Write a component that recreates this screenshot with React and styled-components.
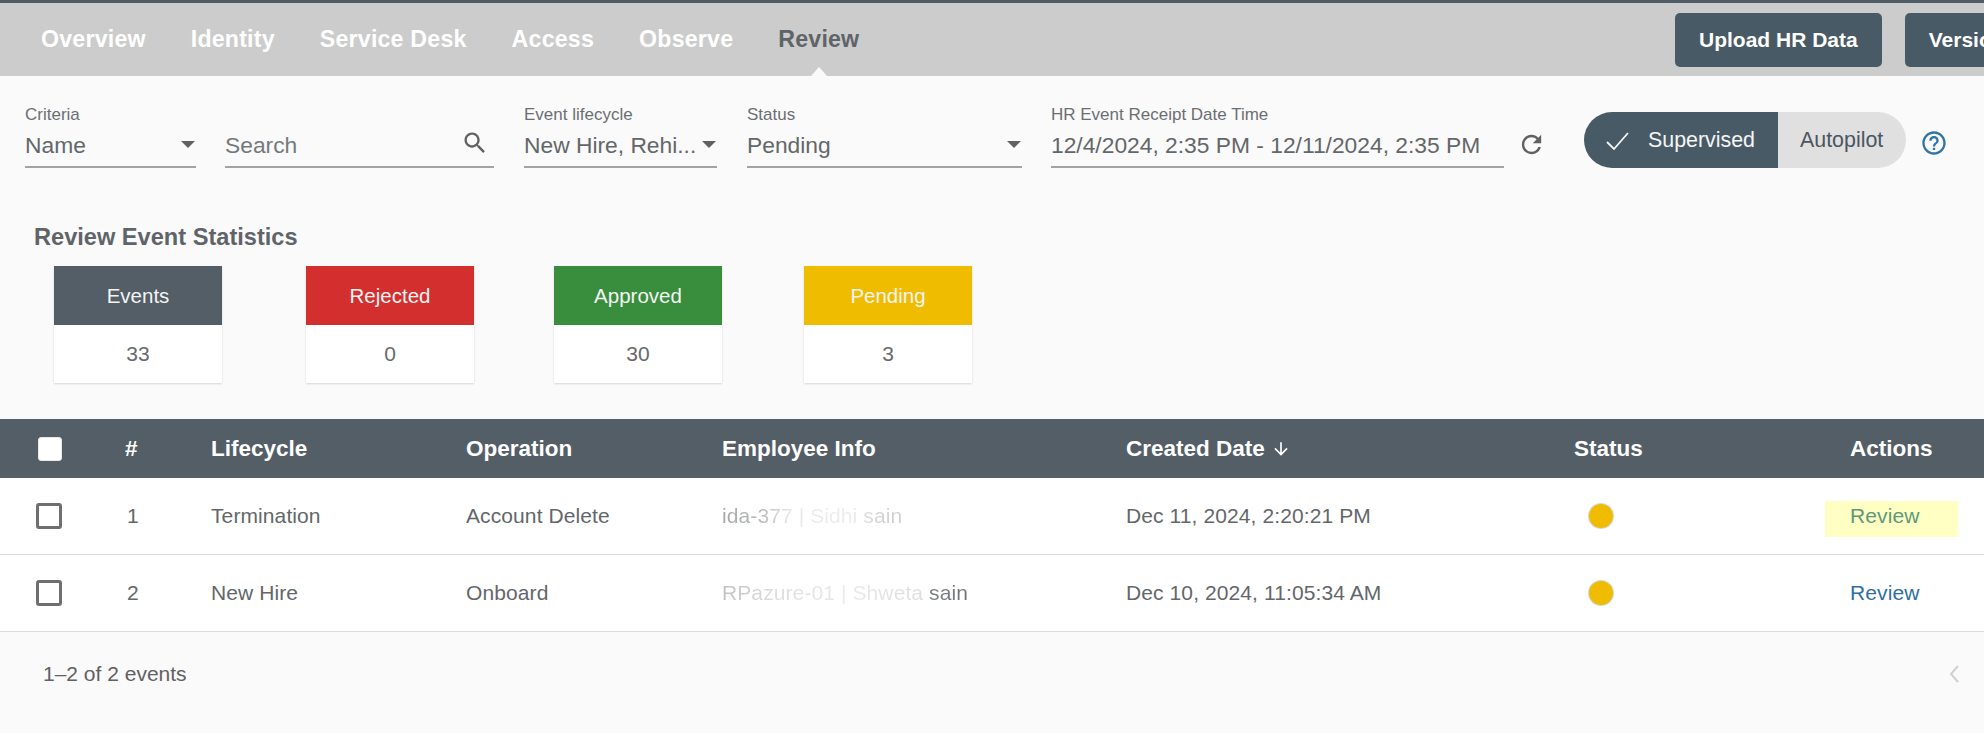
import React from 'react';
import styled, { createGlobalStyle } from 'styled-components';

const GlobalStyle = createGlobalStyle`
  html, body {
    margin: 0;
    padding: 0;
    background: #fafafa;
    font-family: "Liberation Sans", Arial, sans-serif;
    overflow: hidden;
  }
`;

const Page = styled.div`
  width: 1984px;
  height: 733px;
  overflow: hidden;
  background: #fafafa;
  color: #616161;
`;

const TopNav = styled.nav`
  display: flex;
  align-items: center;
  height: 73px;
  box-sizing: content-box;
  border-top: 3px solid #4f5c66;
  background: #cccccc;
  padding-left: 41px;
  overflow: hidden;
`;

const NavLinks = styled.div`
  display: flex;
  gap: 45px;
  flex-shrink: 0;
`;

const NavLink = styled.a`
  position: relative;
  height: 73px;
  line-height: 73px;
  font-size: 23.2px;
  font-weight: 700;
  letter-spacing: 0.2px;
  color: ${({ $active }) => ($active ? '#5f6469' : '#ffffff')};
  ${({ $active }) =>
    $active &&
    `&::after {
      content: '';
      position: absolute;
      left: 50%;
      bottom: 0;
      margin-left: -8px;
      border-left: 8px solid transparent;
      border-right: 8px solid transparent;
      border-bottom: 9px solid #fafafa;
    }`}
`;

const NavActions = styled.div`
  display: flex;
  gap: 23px;
  margin-left: auto;
  flex-shrink: 0;
  width: 309px;
`;

const NavButton = styled.button`
  flex-shrink: 0;
  height: 54px;
  border: 0;
  border-radius: 5px;
  background: #475a65;
  color: #ffffff;
  font-family: inherit;
  font-size: 21px;
  font-weight: 700;
  padding: 0 24px;
  white-space: nowrap;
`;

const FilterBar = styled.div`
  display: flex;
  align-items: flex-start;
  padding: 29px 0 0 25px;
`;

const Field = styled.div`
  width: ${({ $w }) => $w}px;
  margin-right: ${({ $gap }) => $gap}px;
  flex-shrink: 0;
`;

const FieldLabel = styled.div`
  height: 20px;
  line-height: 20px;
  font-size: 17px;
  color: #6b6f73;
  white-space: nowrap;
`;

const FieldValue = styled.div`
  display: flex;
  align-items: center;
  justify-content: space-between;
  box-sizing: border-box;
  height: 43px;
  border-bottom: 2px solid #a3a3a3;
  font-size: 22.8px;
  color: ${({ $muted }) => ($muted ? '#75797c' : '#63676a')};
  white-space: nowrap;
`;

const Caret = styled.span`
  width: 0;
  height: 0;
  margin-right: 1px;
  margin-bottom: 3px;
  border-left: 7px solid transparent;
  border-right: 7px solid transparent;
  border-top: 7px solid #616161;
`;

const IconButton = styled.span`
  display: flex;
  color: ${({ $color }) => $color || '#616161'};
  margin: ${({ $m }) => $m};
`;

const ModeToggle = styled.div`
  display: flex;
  width: 322px;
  height: 56px;
  margin: 7px 16px 0 0;
  border-radius: 28px;
  overflow: hidden;
  flex-shrink: 0;
  font-size: 21.4px;
`;

const ModeOption = styled.div`
  display: flex;
  align-items: center;
  box-sizing: border-box;
  height: 100%;
  width: ${({ $w }) => $w}px;
  padding: 1px 0 0 ${({ $pl }) => $pl}px;
  gap: 17px;
  background: ${({ $on }) => ($on ? '#475a65' : '#e0e0e0')};
  color: ${({ $on }) => ($on ? '#f5f5f5' : '#4b5660')};
`;

const StatsSection = styled.section`
  padding: 55px 0 0 34px;
`;

const StatsTitle = styled.h2`
  margin: 0;
  height: 28px;
  line-height: 28px;
  font-size: 23.6px;
  font-weight: 700;
  color: #5f6469;
`;

const StatsRow = styled.div`
  display: grid;
  grid-template-columns: 252px 248px 250px 168px;
  margin: 15px 0 0 20px;
`;

const StatCard = styled.div`
  width: 168px;
  background: #ffffff;
  box-shadow: 0 1px 2px rgba(0, 0, 0, 0.14);
`;

const StatHead = styled.div`
  height: 59px;
  line-height: 59px;
  text-align: center;
  font-size: 20.5px;
  color: #f4f4f4;
  background: ${({ $bg }) => $bg};
`;

const StatValue = styled.div`
  height: 58px;
  line-height: 58px;
  text-align: center;
  font-size: 21px;
  color: #666a6d;
`;

const EventTable = styled.div`
  margin-top: 36px;
`;

const columns = '91px 84px 255px 256px 404px 448px 276px 1fr';

const HeadRow = styled.div`
  display: grid;
  grid-template-columns: ${columns};
  align-items: center;
  height: 59px;
  padding-left: 36px;
  background: #535e67;
  color: #ffffff;
  font-size: 22.5px;
  font-weight: 700;
`;

const BodyRow = styled.div`
  display: grid;
  grid-template-columns: ${columns};
  align-items: center;
  height: 76px;
  padding-left: 36px;
  background: #ffffff;
  border-bottom: 1px solid #dcdcdc;
  font-size: 21px;
  letter-spacing: 0.1px;
  color: #63676a;
`;

const Check = styled.span`
  display: block;
  box-sizing: border-box;
  width: ${({ $white }) => ($white ? '24px' : '26px')};
  height: ${({ $white }) => ($white ? '24px' : '26px')};
  border-radius: 3px;
  border: ${({ $white }) => ($white ? '1px solid #e8e8e8' : '3px solid #6f6f6f')};
  background: #ffffff;
  margin-left: ${({ $white }) => ($white ? '2px' : '0')};
`;

const HeadNumber = styled.span`
  margin-left: -2px;
`;

const SortLabel = styled.span`
  display: flex;
  align-items: center;
  gap: 6px;
`;

const StatusDot = styled.span`
  display: block;
  width: 24px;
  height: 24px;
  margin-left: 15px;
  border-radius: 50%;
  background: #f0bc00;
  box-shadow: 0 0 0 1px #d8d8d8;
`;

const Redacted = styled.span`
  justify-self: start;
  background-image: linear-gradient(90deg, ${({ $stops }) => $stops});
  -webkit-background-clip: text;
  background-clip: text;
  color: transparent;
  white-space: nowrap;
`;

const ReviewLink = styled.a`
  justify-self: start;
  box-sizing: border-box;
  width: 133px;
  margin-left: -25px;
  margin-top: ${({ $flagged }) => ($flagged ? '6px' : '0')};
  padding: ${({ $flagged }) => ($flagged ? '3px 0 9px 25px' : '0 0 0 25px')};
  background: ${({ $flagged }) => ($flagged ? '#ffffc4' : 'transparent')};
  color: ${({ $flagged }) => ($flagged ? '#5e9a7a' : '#2f6f9f')};
`;

const TableFooter = styled.div`
  display: flex;
  align-items: center;
  justify-content: space-between;
  height: 84px;
  padding: 0 24px 0 43px;
  font-size: 21px;
  color: #616161;
`;

const Icon = ({ d, size = 28 }) => (
  <svg width={size} height={size} viewBox="0 0 24 24" fill="currentColor">
    <path d={d} />
  </svg>
);

const SEARCH = 'M15.5 14h-.79l-.28-.27C15.41 12.59 16 11.11 16 9.5 16 5.91 13.09 3 9.5 3S3 5.91 3 9.5 5.91 16 9.5 16c1.61 0 3.09-.59 4.23-1.57l.27.28v.79l5 4.99L20.49 19l-4.99-5zm-6 0C7.01 14 5 11.99 5 9.5S7.01 5 9.5 5 14 7.01 14 9.5 11.99 14 9.5 14z';
const REFRESH = 'M17.65 6.35C16.2 4.9 14.21 4 12 4c-4.42 0-7.99 3.58-7.99 8s3.57 8 7.99 8c3.73 0 6.84-2.55 7.73-6h-2.08c-.82 2.33-3.04 4-5.65 4-3.31 0-6-2.69-6-6s2.69-6 6-6c1.66 0 3.14.69 4.22 1.78L13 11h7V4l-2.35 2.35z';
const HELP = 'M11 18h2v-2h-2v2zm1-16C6.48 2 2 6.48 2 12s4.48 10 10 10 10-4.48 10-10S17.52 2 12 2zm0 18c-4.41 0-8-3.59-8-8s3.59-8 8-8 8 3.59 8 8-3.59 8-8 8zm0-14c-2.21 0-4 1.79-4 4h2c0-1.1.9-2 2-2s2 .9 2 2c0 2-3 1.75-3 5h2c0-2.25 3-2.5 3-5 0-2.21-1.79-4-4-4z';
const ARROW_DOWN = 'M20 12l-1.41-1.41L13 16.17V4h-2v12.17l-5.58-5.59L4 12l8 8 8-8z';

const navItems = ['Overview', 'Identity', 'Service Desk', 'Access', 'Observe', 'Review'];

const stats = [
  { label: 'Events', value: 33, color: '#535e67' },
  { label: 'Rejected', value: 0, color: '#d32f2f' },
  { label: 'Approved', value: 30, color: '#388e3c' },
  { label: 'Pending', value: 3, color: '#f0bc00' },
];

const rows = [
  {
    lifecycle: 'Termination',
    operation: 'Account Delete',
    employee: 'ida-377 | Sidhi sain',
    stops: '#a4a6a8 0%, #b8babb 22%, #e8e8e8 38%, #eeeeee 72%, #d4d4d4 85%, #cfcfcf 100%',
    created: 'Dec 11, 2024, 2:20:21 PM',
    flagged: true,
  },
  {
    lifecycle: 'New Hire',
    operation: 'Onboard',
    employee: 'RPazure-01 | Shweta sain',
    stops: '#bfc1c2 0%, #dcdcdc 20%, #eaeaea 50%, #dedede 82%, #7d8184 84%, #707477 100%',
    created: 'Dec 10, 2024, 11:05:34 AM',
    flagged: false,
  },
];

const App = () => (
  <Page>
    <GlobalStyle />
    <TopNav>
      <NavLinks>
        {navItems.map((item) => (
          <NavLink key={item} $active={item === 'Review'}>{item}</NavLink>
        ))}
      </NavLinks>
      <NavActions>
        <NavButton>Upload HR Data</NavButton>
        <NavButton>Version</NavButton>
      </NavActions>
    </TopNav>

    <FilterBar>
      <Field $w={171} $gap={29}>
        <FieldLabel>Criteria</FieldLabel>
        <FieldValue>Name<Caret /></FieldValue>
      </Field>
      <Field $w={269} $gap={30}>
        <FieldLabel>&nbsp;</FieldLabel>
        <FieldValue $muted>
          Search
          <IconButton $m="-6px 5px 0 0"><Icon d={SEARCH} /></IconButton>
        </FieldValue>
      </Field>
      <Field $w={193} $gap={30}>
        <FieldLabel>Event lifecycle</FieldLabel>
        <FieldValue>New Hire, Rehi...<Caret /></FieldValue>
      </Field>
      <Field $w={275} $gap={29}>
        <FieldLabel>Status</FieldLabel>
        <FieldValue>Pending<Caret /></FieldValue>
      </Field>
      <Field $w={453} $gap={13}>
        <FieldLabel>HR Event Receipt Date Time</FieldLabel>
        <FieldValue>12/4/2024, 2:35 PM - 12/11/2024, 2:35 PM</FieldValue>
      </Field>
      <IconButton $m="25px 38px 0 0"><Icon d={REFRESH} size={29} /></IconButton>
      <ModeToggle>
        <ModeOption $on $w={194} $pl={21}>
          <svg width="26" height="22" viewBox="0 0 26 22" fill="none" stroke="currentColor" strokeWidth="1.8">
            <path d="M2 12l7 7L23 3" />
          </svg>
          Supervised
        </ModeOption>
        <ModeOption $w={128} $pl={22}>Autopilot</ModeOption>
      </ModeToggle>
      <IconButton $color="#2f75a8" $m="24px 0 0 -2px"><Icon d={HELP} size={28} /></IconButton>
    </FilterBar>

    <StatsSection>
      <StatsTitle>Review Event Statistics</StatsTitle>
      <StatsRow>
        {stats.map((stat) => (
          <StatCard key={stat.label}>
            <StatHead $bg={stat.color}>{stat.label}</StatHead>
            <StatValue>{stat.value}</StatValue>
          </StatCard>
        ))}
      </StatsRow>
    </StatsSection>

    <EventTable>
      <HeadRow>
        <Check $white />
        <HeadNumber>#</HeadNumber>
        <span>Lifecycle</span>
        <span>Operation</span>
        <span>Employee Info</span>
        <SortLabel>Created Date <Icon d={ARROW_DOWN} size={20} /></SortLabel>
        <span>Status</span>
        <span>Actions</span>
      </HeadRow>
      {rows.map((row, index) => (
        <BodyRow key={row.employee}>
          <Check />
          <span>{index + 1}</span>
          <span>{row.lifecycle}</span>
          <span>{row.operation}</span>
          <Redacted $stops={row.stops}>{row.employee}</Redacted>
          <span>{row.created}</span>
          <StatusDot />
          <ReviewLink $flagged={row.flagged}>Review</ReviewLink>
        </BodyRow>
      ))}
    </EventTable>

    <TableFooter>
      <span>1–2 of 2 events</span>
      <svg width="12" height="20" viewBox="0 0 12 20" fill="none" stroke="#d0d0d0" strokeWidth="2">
        <path d="M10 2L3 10l7 8" />
      </svg>
    </TableFooter>
  </Page>
);

export default App;
